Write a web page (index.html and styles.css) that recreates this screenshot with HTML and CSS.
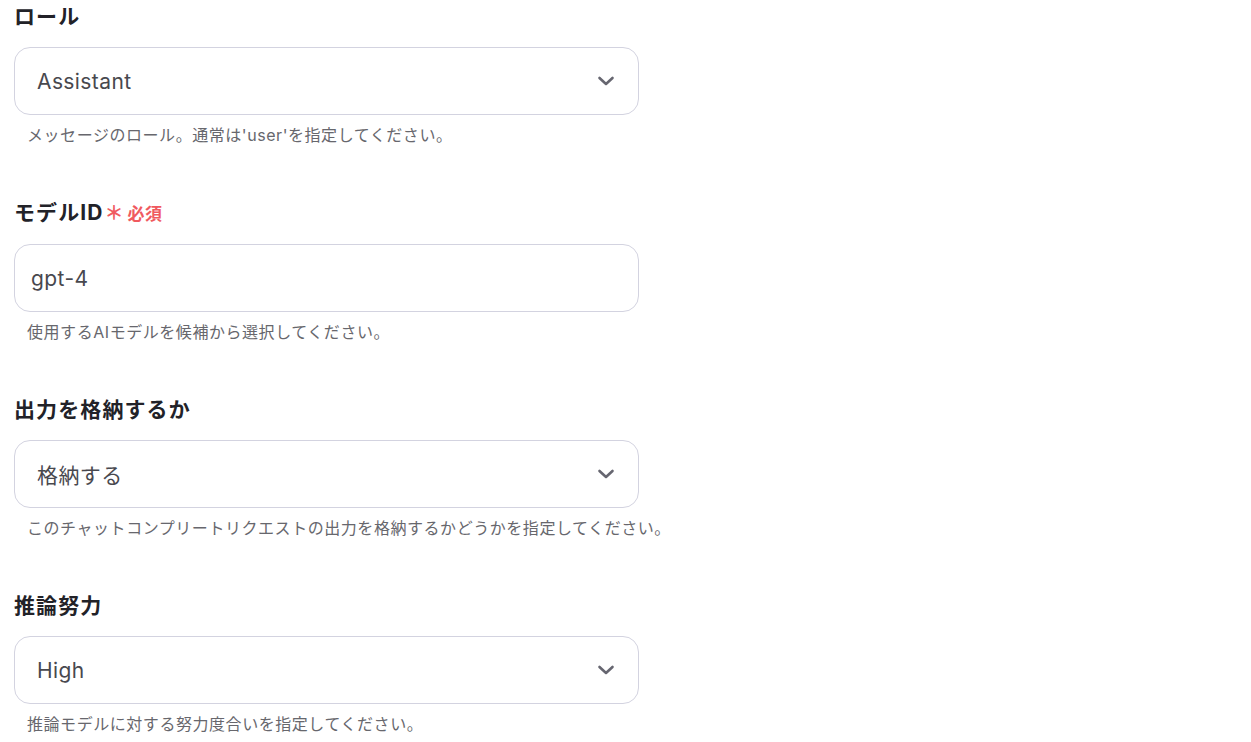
FILE: index.html
```html
<!DOCTYPE html>
<html lang="ja">
<head>
<meta charset="utf-8">
<link rel="stylesheet" href="styles.css">
</head>
<body>
<div class="form">
  <div class="field">
    <div class="label">ロール</div>
    <div class="select">
      <span class="value">Assistant</span>
      <svg class="chev" width="18" height="12" viewBox="0 0 18 12"><path d="M2.5 3 L9 9 L15.5 3" fill="none" stroke="#666670" stroke-width="2.6" stroke-linecap="round" stroke-linejoin="round"/></svg>
    </div>
    <div class="help">メッセージのロール。通常は'user'を指定してください。</div>
  </div>
  <div class="field">
    <div class="label">モデルID<span class="req"><span class="ast">＊</span>必須</span></div>
    <div class="input"><span class="value">gpt-4</span></div>
    <div class="help">使用するAIモデルを候補から選択してください。</div>
  </div>
  <div class="field">
    <div class="label">出力を格納するか</div>
    <div class="select">
      <span class="value">格納する</span>
      <svg class="chev" width="18" height="12" viewBox="0 0 18 12"><path d="M2.5 3 L9 9 L15.5 3" fill="none" stroke="#666670" stroke-width="2.6" stroke-linecap="round" stroke-linejoin="round"/></svg>
    </div>
    <div class="help">このチャットコンプリートリクエストの出力を格納するかどうかを指定してください。</div>
  </div>
  <div class="field">
    <div class="label">推論努力</div>
    <div class="select">
      <span class="value">High</span>
      <svg class="chev" width="18" height="12" viewBox="0 0 18 12"><path d="M2.5 3 L9 9 L15.5 3" fill="none" stroke="#666670" stroke-width="2.6" stroke-linecap="round" stroke-linejoin="round"/></svg>
    </div>
    <div class="help">推論モデルに対する努力度合いを指定してください。</div>
  </div>
</div>
</body>
</html>
```

FILE: styles.css
```css
html, body {
  margin: 0;
  padding: 0;
  background: #ffffff;
}
body {
  font-family: Inter, "Noto Sans CJK JP", sans-serif;
  color: #222;
}
.form {
  padding: 2px 0 0 14px;
  display: flex;
  flex-direction: column;
  gap: 51px;
}
.field {
  width: 625px;
  display: flex;
  flex-direction: column;
}
.label {
  font-size: 21px;
  font-weight: 700;
  letter-spacing: 1.1px;
  line-height: 30px;
  color: #222228;
}
.req {
  color: #f05a5f;
  font-size: 17px;
  margin-left: 1px;
  letter-spacing: 0.5px;
}
.ast {
  display: inline-block;
  font-size: 19px;
  margin-right: 4px;
  letter-spacing: 0;
}
.select, .input {
  margin-top: 15px;
  height: 68px;
  box-sizing: border-box;
  border: 1px solid #d3d3e0;
  border-radius: 16px;
  display: flex;
  align-items: center;
  justify-content: space-between;
}
.select { padding: 0 23px 0 22px; }
.input { padding: 0 16px; }
.value {
  font-size: 21px;
  color: #48484e;
  letter-spacing: 0.4px;
}
.help {
  margin-top: 8px;
  padding-left: 13px;
  font-size: 16px;
  line-height: 24px;
  color: #67676d;
  letter-spacing: 0.55px;
  white-space: nowrap;
}
```
